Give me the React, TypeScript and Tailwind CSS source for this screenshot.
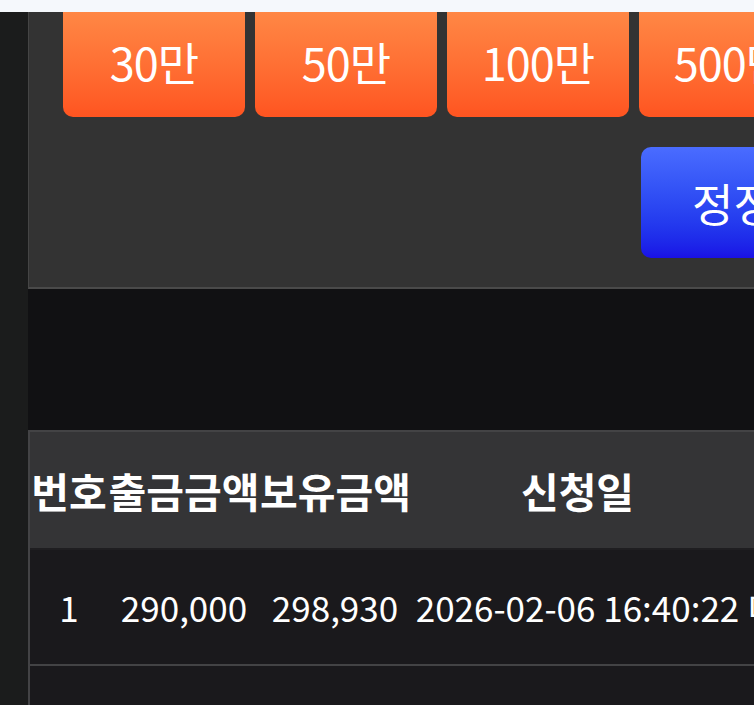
import React from 'react'

const amounts = ['30만', '50만', '100만', '500만']

const font = { fontFamily: '"Noto Sans CJK KR", "Noto Sans", sans-serif' }

export default function App() {
  return (
    <div className="w-[754px] h-[705px] overflow-hidden bg-[#1b1c1c] text-white" style={font}>
      {/* top bar */}
      <div className="h-[12px] bg-[#f5f8fc]" />

      <div className="flex">
        <div className="w-[28px] shrink-0 bg-[#1b1c1c]" />

        <div className="flex-1 min-w-0 overflow-hidden">
          {/* quick amount panel */}
          <div className="h-[277px] overflow-hidden bg-[#333333] border-l border-[#454545] border-b-2 border-b-[#4a4a4a]">
            <div className="flex gap-[10px] pl-[34px] -mt-[12px]">
              {amounts.map((a) => (
                <button
                  key={a}
                  className="w-[182px] h-[117px] shrink-0 rounded-[10px] bg-gradient-to-b from-[#ff8c48] to-[#ff5420] text-[45px] leading-none font-normal text-white pt-[6px] tracking-[-1px] whitespace-nowrap"
                >
                  {a}
                </button>
              ))}
            </div>
            <div className="flex justify-start pl-[612px] mt-[30px]">
              <button className="w-[200px] h-[111px] shrink-0 rounded-[10px] bg-gradient-to-b from-[#4a6cff] to-[#1a10e6] text-[45px] leading-none text-white text-left pl-[51px] whitespace-nowrap">
                정정신청
              </button>
            </div>
          </div>

          <div className="h-[141px] bg-[#111113]" />

          {/* withdrawal list */}
          <div className="border-l-2 border-t-2 border-[#434345]">
            <div className="flex h-[116px] items-center bg-[#343436] text-[41px] leading-none font-bold whitespace-nowrap">
              <div className="w-[78px] shrink-0 text-center">번호</div>
              <div className="w-[152px] shrink-0 text-center">출금금액</div>
              <div className="w-[150px] shrink-0 text-center">보유금액</div>
              <div className="w-[335px] shrink-0 text-center">신청일</div>
              <div className="w-[120px] shrink-0 text-center">상태</div>
            </div>
            <div className="flex h-[116px] items-center bg-[#1a191c] text-[35px] whitespace-nowrap border-t-2 border-[#1f1e21]">
              <div className="w-[78px] shrink-0 text-center">1</div>
              <div className="w-[152px] shrink-0 text-center">290,000</div>
              <div className="w-[150px] shrink-0 text-center">298,930</div>
              <div className="w-[335px] shrink-0 text-center">2026-02-06 16:40:22</div>
              <div className="w-[120px] shrink-0 pl-[3px]">대기</div>
            </div>
            <div className="h-[60px] bg-[#1a191c] border-t-2 border-[#434345]" />
          </div>
        </div>
      </div>
    </div>
  )
}
